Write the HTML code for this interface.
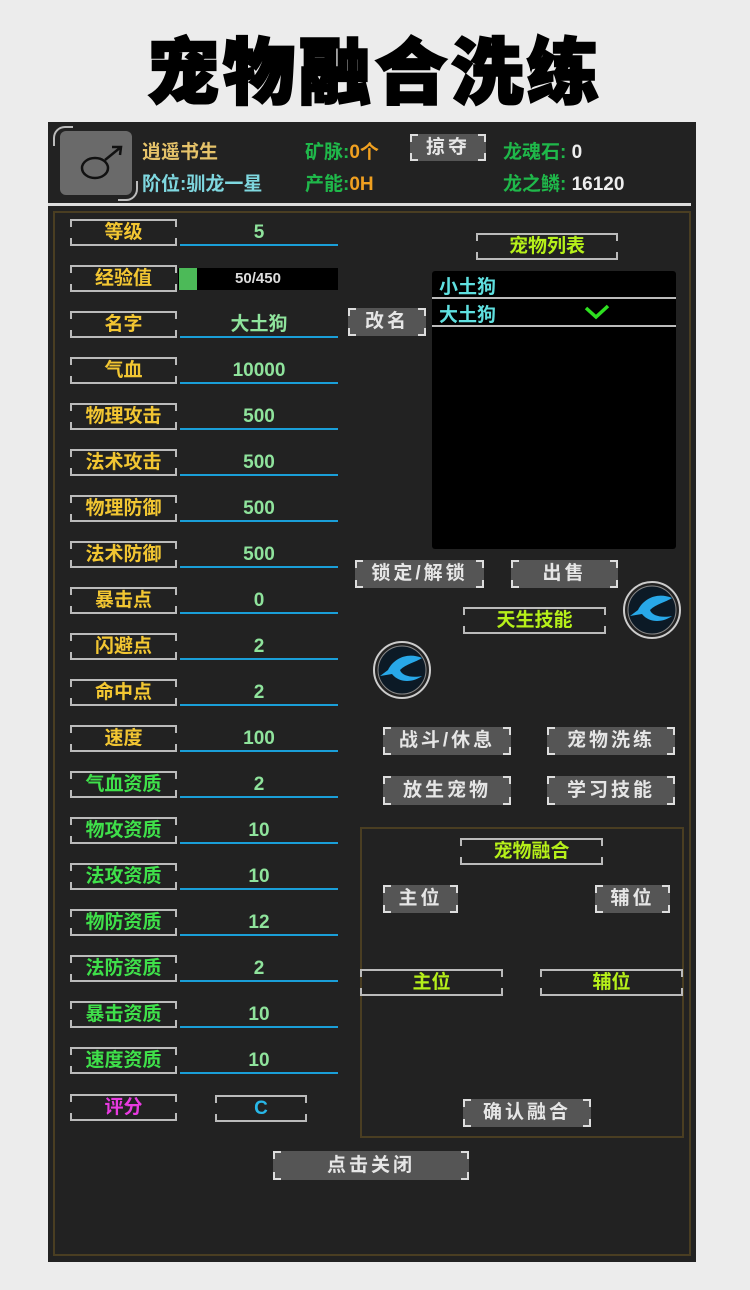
<!DOCTYPE html>
<html><head><meta charset="utf-8"><style>
*{margin:0;padding:0;box-sizing:border-box}
body{width:750px;height:1290px;background:#ececec;position:relative;overflow:hidden;font-family:"Liberation Sans","Noto Sans CJK SC",sans-serif;font-weight:bold}
.a{position:absolute}
.title{left:0;width:750px;top:32px;text-align:center;font-size:72px;font-weight:900;color:#000;letter-spacing:4px;line-height:84px;-webkit-text-stroke:2.5px #000}
.panel{left:48px;top:122px;width:648px;height:1140px;background:#222}
.inner{left:53px;top:211px;width:638px;height:1045px;border:2px solid #4a3e22}
.lb{position:absolute;height:27px;border-top:2px solid #bbb;border-bottom:2px solid #bbb;text-align:center;line-height:23px;font-size:19px;
background:linear-gradient(#bbb,#bbb) left top/2px 6px no-repeat,linear-gradient(#bbb,#bbb) right top/2px 6px no-repeat,linear-gradient(#bbb,#bbb) left bottom/2px 6px no-repeat,linear-gradient(#bbb,#bbb) right bottom/2px 6px no-repeat}
.gb{position:absolute;background-color:#555;color:#e6e6e6;text-align:center;font-size:19px;letter-spacing:3px;
background-image:linear-gradient(#ddd,#ddd),linear-gradient(#ddd,#ddd),linear-gradient(#ddd,#ddd),linear-gradient(#ddd,#ddd),linear-gradient(#ddd,#ddd),linear-gradient(#ddd,#ddd),linear-gradient(#ddd,#ddd),linear-gradient(#ddd,#ddd);
background-size:8px 2px,2px 8px,8px 2px,2px 8px,8px 2px,2px 8px,8px 2px,2px 8px;
background-position:left top,left top,right top,right top,left bottom,left bottom,right bottom,right bottom;background-repeat:no-repeat}
.y{color:#f2c632}.g{color:#3fe04a}.v{color:#8fe39c}.lg{color:#b6f01a}
.val{position:absolute;left:180px;width:158px;height:27px;border-bottom:2px solid #1a9fd8;text-align:center;font-size:19px;line-height:27px;color:#8fe39c}
</style></head><body>
<div class="a title">宠物融合洗练</div>
<div class="a panel"></div>
<!-- header -->
<div class="a" style="left:60px;top:131px;width:72px;height:64px;background:#6a6a6a;border-radius:6px"></div>
<div class="a" style="left:53px;top:126px;width:20px;height:20px;border-left:2px solid #bbb;border-top:2px solid #bbb;border-top-left-radius:12px"></div>
<div class="a" style="left:118px;top:181px;width:20px;height:20px;border-right:2px solid #bbb;border-bottom:2px solid #bbb;border-bottom-right-radius:12px"></div>
<svg class="a" style="left:78px;top:142px" width="50" height="42" viewBox="0 0 50 42"><ellipse cx="17" cy="26" rx="13" ry="10" fill="none" stroke="#111" stroke-width="2.5"/><path d="M27 18 L43 5 M34 5 L43 5 L42 13" fill="none" stroke="#111" stroke-width="2.5"/></svg>
<div class="a" style="left:142px;top:137px;font-size:19px;color:#e6c36a">逍遥书生</div>
<div class="a" style="left:142px;top:169px;font-size:19px;color:#7fd8e0">阶位:驯龙一星</div>
<div class="a" style="left:305px;top:137px;font-size:19px"><span style="color:#1fb84a">矿脉:</span><span style="color:#f0a020">0个</span></div>
<div class="a" style="left:305px;top:169px;font-size:19px"><span style="color:#1fb84a">产能:</span><span style="color:#f0a020">0H</span></div>
<div class="gb" style="left:410px;top:134px;width:76px;height:27px;line-height:27px">掠夺</div>
<div class="a" style="left:503px;top:137px;font-size:19px"><span style="color:#1fb84a">龙魂石:</span><span style="color:#eee"> 0</span></div>
<div class="a" style="left:503px;top:169px;font-size:19px"><span style="color:#1fb84a">龙之鳞:</span><span style="color:#eee"> 16120</span></div>
<div class="a" style="left:48px;top:203px;width:643px;height:3px;background:#ddd"></div>
<div class="a inner"></div>

<!-- rows -->
<div class="lb y" style="left:70px;top:219px;width:107px">等级</div><div class="val" style="top:219px">5</div>
<div class="lb y" style="left:70px;top:265px;width:107px">经验值</div>
<div class="a" style="left:178px;top:268px;width:160px;height:22px;background:#000"></div>
<div class="a" style="left:179px;top:268px;width:18px;height:22px;background:#4cba58"></div>
<div class="a" style="left:178px;top:268px;width:160px;height:22px;text-align:center;line-height:22px;font-size:15px;color:#ddd">50/450</div>
<div class="lb y" style="left:70px;top:311px;width:107px">名字</div><div class="val lg" style="top:311px">大土狗</div>
<div class="lb y" style="left:70px;top:357px;width:107px">气血</div><div class="val" style="top:357px">10000</div>
<div class="lb y" style="left:70px;top:403px;width:107px">物理攻击</div><div class="val" style="top:403px">500</div>
<div class="lb y" style="left:70px;top:449px;width:107px">法术攻击</div><div class="val" style="top:449px">500</div>
<div class="lb y" style="left:70px;top:495px;width:107px">物理防御</div><div class="val" style="top:495px">500</div>
<div class="lb y" style="left:70px;top:541px;width:107px">法术防御</div><div class="val" style="top:541px">500</div>
<div class="lb y" style="left:70px;top:587px;width:107px">暴击点</div><div class="val" style="top:587px">0</div>
<div class="lb y" style="left:70px;top:633px;width:107px">闪避点</div><div class="val" style="top:633px">2</div>
<div class="lb y" style="left:70px;top:679px;width:107px">命中点</div><div class="val" style="top:679px">2</div>
<div class="lb y" style="left:70px;top:725px;width:107px">速度</div><div class="val" style="top:725px">100</div>
<div class="lb g" style="left:70px;top:771px;width:107px">气血资质</div><div class="val" style="top:771px">2</div>
<div class="lb g" style="left:70px;top:817px;width:107px">物攻资质</div><div class="val" style="top:817px">10</div>
<div class="lb g" style="left:70px;top:863px;width:107px">法攻资质</div><div class="val" style="top:863px">10</div>
<div class="lb g" style="left:70px;top:909px;width:107px">物防资质</div><div class="val" style="top:909px">12</div>
<div class="lb g" style="left:70px;top:955px;width:107px">法防资质</div><div class="val" style="top:955px">2</div>
<div class="lb g" style="left:70px;top:1001px;width:107px">暴击资质</div><div class="val" style="top:1001px">10</div>
<div class="lb g" style="left:70px;top:1047px;width:107px">速度资质</div><div class="val" style="top:1047px">10</div>
<div class="lb" style="left:70px;top:1094px;width:107px;color:#e83ae0">评分</div>
<div class="lb" style="left:215px;top:1095px;width:92px;color:#28b8e8">C</div>

<!-- right -->
<div class="gb" style="left:348px;top:308px;width:78px;height:28px;line-height:28px">改名</div>
<div class="lb lg" style="left:476px;top:233px;width:142px">宠物列表</div>
<div class="a" style="left:432px;top:271px;width:244px;height:278px;background:#000;border-radius:3px"></div>
<div class="a" style="left:439px;top:272px;font-size:19px;color:#5fe0e0">小土狗</div>
<div class="a" style="left:432px;top:297px;width:244px;height:2px;background:#bbb"></div>
<div class="a" style="left:439px;top:300px;font-size:19px;color:#5fe0e0">大土狗</div>
<svg class="a" style="left:584px;top:304px" width="26" height="16"><path d="M2 4 L12 13 L24 2" fill="none" stroke="#2ee020" stroke-width="3.5"/></svg>
<div class="a" style="left:432px;top:325px;width:244px;height:2px;background:#bbb"></div>

<div class="gb" style="left:355px;top:560px;width:129px;height:28px;line-height:28px">锁定/解锁</div>
<div class="gb" style="left:511px;top:560px;width:107px;height:28px;line-height:28px">出售</div>
<div class="lb lg" style="left:463px;top:607px;width:143px">天生技能</div>
<svg class="a" style="left:622px;top:580px" width="60" height="60" viewBox="0 0 60 60"><circle cx="30" cy="30" r="28" fill="none" stroke="#ccc" stroke-width="2"/><circle cx="30" cy="30" r="24" fill="#0c1a26" stroke="#888" stroke-width="1"/><path d="M50 18 C36 12 22 18 16 30 L8 36 L20 34 C28 44 42 42 50 36 C40 38 30 36 28 30 C34 24 44 22 50 18Z" fill="#28a8e8"/></svg>
<svg class="a" style="left:372px;top:640px" width="60" height="60" viewBox="0 0 60 60"><circle cx="30" cy="30" r="28" fill="none" stroke="#ccc" stroke-width="2"/><circle cx="30" cy="30" r="24" fill="#0c1a26" stroke="#888" stroke-width="1"/><path d="M50 18 C36 12 22 18 16 30 L8 36 L20 34 C28 44 42 42 50 36 C40 38 30 36 28 30 C34 24 44 22 50 18Z" fill="#28a8e8"/></svg>

<div class="gb" style="left:383px;top:727px;width:128px;height:28px;line-height:28px">战斗/休息</div>
<div class="gb" style="left:547px;top:727px;width:128px;height:28px;line-height:28px">宠物洗练</div>
<div class="gb" style="left:383px;top:776px;width:128px;height:29px;line-height:29px">放生宠物</div>
<div class="gb" style="left:547px;top:776px;width:128px;height:29px;line-height:29px">学习技能</div>

<div class="a" style="left:360px;top:827px;width:324px;height:311px;border:2px solid #4a3e22"></div>
<div class="lb lg" style="left:460px;top:838px;width:143px">宠物融合</div>
<div class="gb" style="left:383px;top:885px;width:75px;height:28px;line-height:28px">主位</div>
<div class="gb" style="left:595px;top:885px;width:75px;height:28px;line-height:28px">辅位</div>
<div class="lb lg" style="left:360px;top:969px;width:143px">主位</div>
<div class="lb lg" style="left:540px;top:969px;width:143px">辅位</div>
<div class="gb" style="left:463px;top:1099px;width:128px;height:28px;line-height:28px">确认融合</div>
<div class="gb" style="left:273px;top:1151px;width:196px;height:29px;line-height:29px">点击关闭</div>
</body></html>
